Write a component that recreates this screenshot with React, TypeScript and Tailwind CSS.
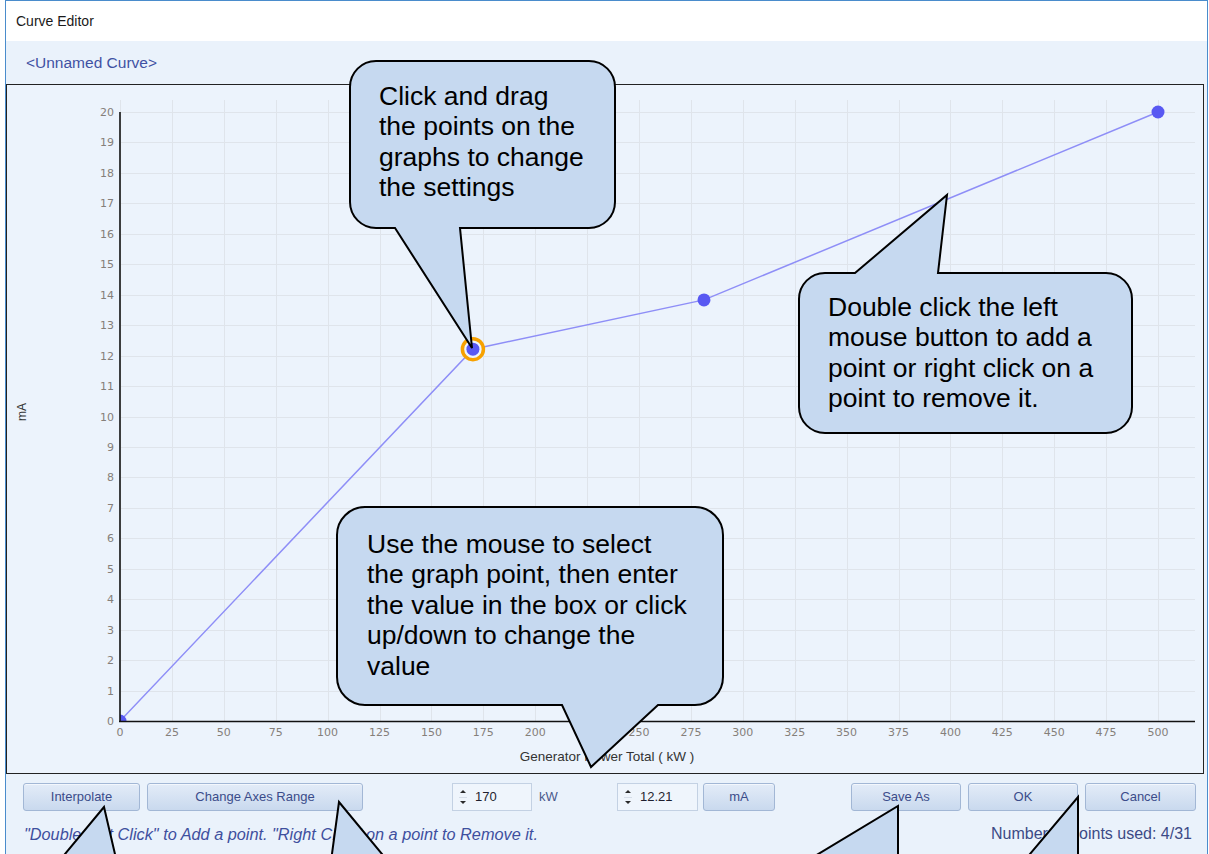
import React from "react";

const X = (v: number) => 113 + v * 2.076;
const Y = (v: number) => 636 - v * 30.45;

type Tail = { side: "top" | "bottom"; a: number; b: number; tx: number; ty: number };

function calloutPath(x: number, y: number, w: number, h: number, r: number, t: Tail) {
  const x2 = x + w;
  const y2 = y + h;
  let d = `M ${x + r} ${y}`;
  if (t.side === "top") d += ` L ${t.a} ${y} L ${t.tx} ${t.ty} L ${t.b} ${y}`;
  d += ` L ${x2 - r} ${y} A ${r} ${r} 0 0 1 ${x2} ${y + r} L ${x2} ${y2 - r} A ${r} ${r} 0 0 1 ${x2 - r} ${y2}`;
  if (t.side === "bottom") d += ` L ${t.b} ${y2} L ${t.tx} ${t.ty} L ${t.a} ${y2}`;
  d += ` L ${x + r} ${y2} A ${r} ${r} 0 0 1 ${x} ${y2 - r} L ${x} ${y + r} A ${r} ${r} 0 0 1 ${x + r} ${y} Z`;
  return d;
}

const yTicks = Array.from({ length: 21 }, (_, i) => i);
const xTicks = Array.from({ length: 21 }, (_, i) => i * 25);
const data: [number, number][] = [
  [0, 0],
  [170, 12.21],
  [281.3, 13.83],
  [500, 20],
];

function Chart() {
  const pts = data.map(([a, b]) => `${X(a)},${Y(b)}`).join(" ");
  return (
    <svg width="1196" height="688" className="block">
      <defs>
        <clipPath id="plot">
          <rect x="113" y="0" width="1083" height="636" />
        </clipPath>
      </defs>
      {yTicks.map((v) => (
        <line key={"h" + v} x1={113} x2={1188} y1={Math.round(Y(v)) + 0.5} y2={Math.round(Y(v)) + 0.5} stroke="#dfe4eb" strokeWidth="1" />
      ))}
      {xTicks.map((v) => (
        <line key={"v" + v} x1={Math.round(X(v)) + 0.5} x2={Math.round(X(v)) + 0.5} y1={15} y2={636} stroke="#dfe4eb" strokeWidth="1" />
      ))}
      {yTicks.map((v) => (
        <text key={"yl" + v} x={107} y={Y(v) + 4} textAnchor="end" fontFamily="'DejaVu Sans', sans-serif" fontSize="11" fill="#857f7a">
          {v}
        </text>
      ))}
      {xTicks.map((v) => (
        <text key={"xl" + v} x={X(v)} y={651} textAnchor="middle" fontFamily="'DejaVu Sans', sans-serif" fontSize="11" fill="#857f7a">
          {v}
        </text>
      ))}
      <g clipPath="url(#plot)">
        <polyline points={pts} fill="none" stroke="#8e8ef7" strokeWidth="1.5" />
        <circle cx={X(0)} cy={Y(0)} r="6.5" fill="#5858f2" />
        <circle cx={X(281.3)} cy={Y(13.83)} r="6.5" fill="#5858f2" />
        <circle cx={X(500)} cy={Y(20)} r="6.5" fill="#5858f2" />
        <circle cx={X(170)} cy={Y(12.21)} r="10.5" fill="#eef4fc" stroke="#f7a100" strokeWidth="3.5" />
        <circle cx={X(170)} cy={Y(12.21)} r="6.5" fill="#5858f2" />
      </g>
      <line x1={113} x2={113} y1={Y(20)} y2={637} stroke="#111" strokeWidth="1.6" />
      <line x1={112} x2={1188} y1={636.5} y2={636.5} stroke="#111" strokeWidth="1.6" />
      <text x={0} y={0} transform="translate(19 327) rotate(-90)" textAnchor="middle" fontFamily="'Liberation Sans', Arial, sans-serif" fontSize="12" fill="#333">
        mA
      </text>
      <text x={600} y={676} textAnchor="middle" fontFamily="'Liberation Sans', Arial, sans-serif" fontSize="13.5" fill="#333">
        Generator Power Total ( kW )
      </text>
    </svg>
  );
}

function Spinner({ value, className }: { value: string; className: string }) {
  return (
    <div className={"flex h-[28px] shrink-0 items-center border border-[#c3d1e3] bg-[#eff5fc] " + className}>
      <svg width="8" height="20" className="ml-[6px] shrink-0">
        <path d="M1 6 L4 3 L7 6 Z" fill="#2a2a2a" />
        <line x1="0" x2="8" y1="10.5" y2="10.5" stroke="#d5dde8" />
        <path d="M1 14 L4 17 L7 14 Z" fill="#2a2a2a" />
      </svg>
      <span className="ml-[8px] text-[13px] text-[#1f1f2f]">{value}</span>
    </div>
  );
}

const btn =
  "flex h-[28px] shrink-0 items-center justify-center rounded-[3px] border border-[#a2b7d5] bg-linear-to-b from-[#e3ecf8] to-[#c9d9ee] text-[13px] text-[#3b4c8a] shadow-[inset_0_1px_0_#f3f7fd]";

const fill = "#c6d9f0";

export default function App() {
  return (
    <div className="relative h-[854px] w-[1209px] overflow-hidden bg-white font-['Liberation_Sans',Arial,sans-serif]">
      <div className="ml-[5px] flex h-[854px] w-[1203px] flex-col border-x border-t border-[#4a8ccc]">
        <div className="flex h-[40px] shrink-0 items-center bg-white pl-[10px] text-[14px] text-[#1a1a1a]">Curve Editor</div>
        <div className="flex flex-1 flex-col bg-[#eaf2fb]">
          <div className="flex h-[43px] shrink-0 items-center pl-[20px] text-[15.5px] text-[#3f51a3]">&lt;Unnamed Curve&gt;</div>
          <div className="h-[690px] w-[1198px] shrink-0 border border-[#222] bg-[#ecf3fc]">
            <Chart />
          </div>
          <div className="flex flex-col pl-[17px] pt-[9px]">
            <div className="flex items-center">
              <div className={btn + " w-[117px]"}>Interpolate</div>
              <div className={btn + " ml-[7px] w-[216px]"}>Change Axes Range</div>
              <Spinner value="170" className="ml-[89px] w-[80px]" />
              <span className="ml-[7px] w-[78px] shrink-0 text-[13px] text-[#4b5a8c]">kW</span>
              <Spinner value="12.21" className="w-[81px]" />
              <div className={btn + " ml-[5px] w-[72px]"}>mA</div>
              <div className={btn + " ml-[76px] w-[110px]"}>Save As</div>
              <div className={btn + " ml-[7px] w-[110px]"}>OK</div>
              <div className={btn + " ml-[7px] w-[111px]"}>Cancel</div>
            </div>
            <div className="mt-[12px] flex h-[22px] items-center justify-between pl-[1px] pr-[15px] text-[16px] text-[#3e4f9e]">
              <span className="text-[16.3px] italic">"Double Left Click" to Add a point. "Right Click" on a point to Remove it.</span>
              <span className="text-[#3c4a86]">Number of points used: 4/31</span>
            </div>
          </div>
        </div>
      </div>

      <svg className="pointer-events-none absolute left-0 top-0" width="1209" height="854">
        <path d={calloutPath(350, 61, 265, 167, 26, { side: "bottom", a: 395, b: 460, tx: 472, ty: 348 })} fill={fill} stroke="#000" strokeWidth="2" />
        <path d={calloutPath(799, 273, 333, 160, 26, { side: "top", a: 855, b: 938, tx: 947, ty: 195 })} fill={fill} stroke="#000" strokeWidth="2" />
        <path d={calloutPath(337, 507, 386, 198, 28, { side: "bottom", a: 562, b: 658, tx: 591, ty: 767 })} fill={fill} stroke="#000" strokeWidth="2" />
        <path d="M 51.7 870 L 104 807 L 118.7 870" fill={fill} stroke="#000" strokeWidth="2" />
        <path d="M 329.8 870 L 339 802 L 395.2 870" fill={fill} stroke="#000" strokeWidth="2" />
        <path d="M 791.7 870 L 898 806 L 898 870" fill={fill} stroke="#000" strokeWidth="2" />
        <path d="M 1016.5 870 L 1078 797 L 1078 870" fill={fill} stroke="#000" strokeWidth="2" />
      </svg>

      <div className="pointer-events-none absolute left-[379px] top-[81px] text-[26.5px] leading-[30.4px] text-black">
        <div>Click and drag</div>
        <div>the points on the</div>
        <div>graphs to change</div>
        <div>the settings</div>
      </div>
      <div className="pointer-events-none absolute left-[828px] top-[292px] text-[26.5px] leading-[30.4px] text-black">
        <div>Double click the left</div>
        <div>mouse button to add a</div>
        <div>point or right click on a</div>
        <div>point to remove it.</div>
      </div>
      <div className="pointer-events-none absolute left-[367px] top-[529px] text-[26.5px] leading-[30.4px] text-black">
        <div>Use the mouse to select</div>
        <div>the graph point, then enter</div>
        <div>the value in the box or click</div>
        <div>up/down to change the</div>
        <div>value</div>
      </div>
    </div>
  );
}
